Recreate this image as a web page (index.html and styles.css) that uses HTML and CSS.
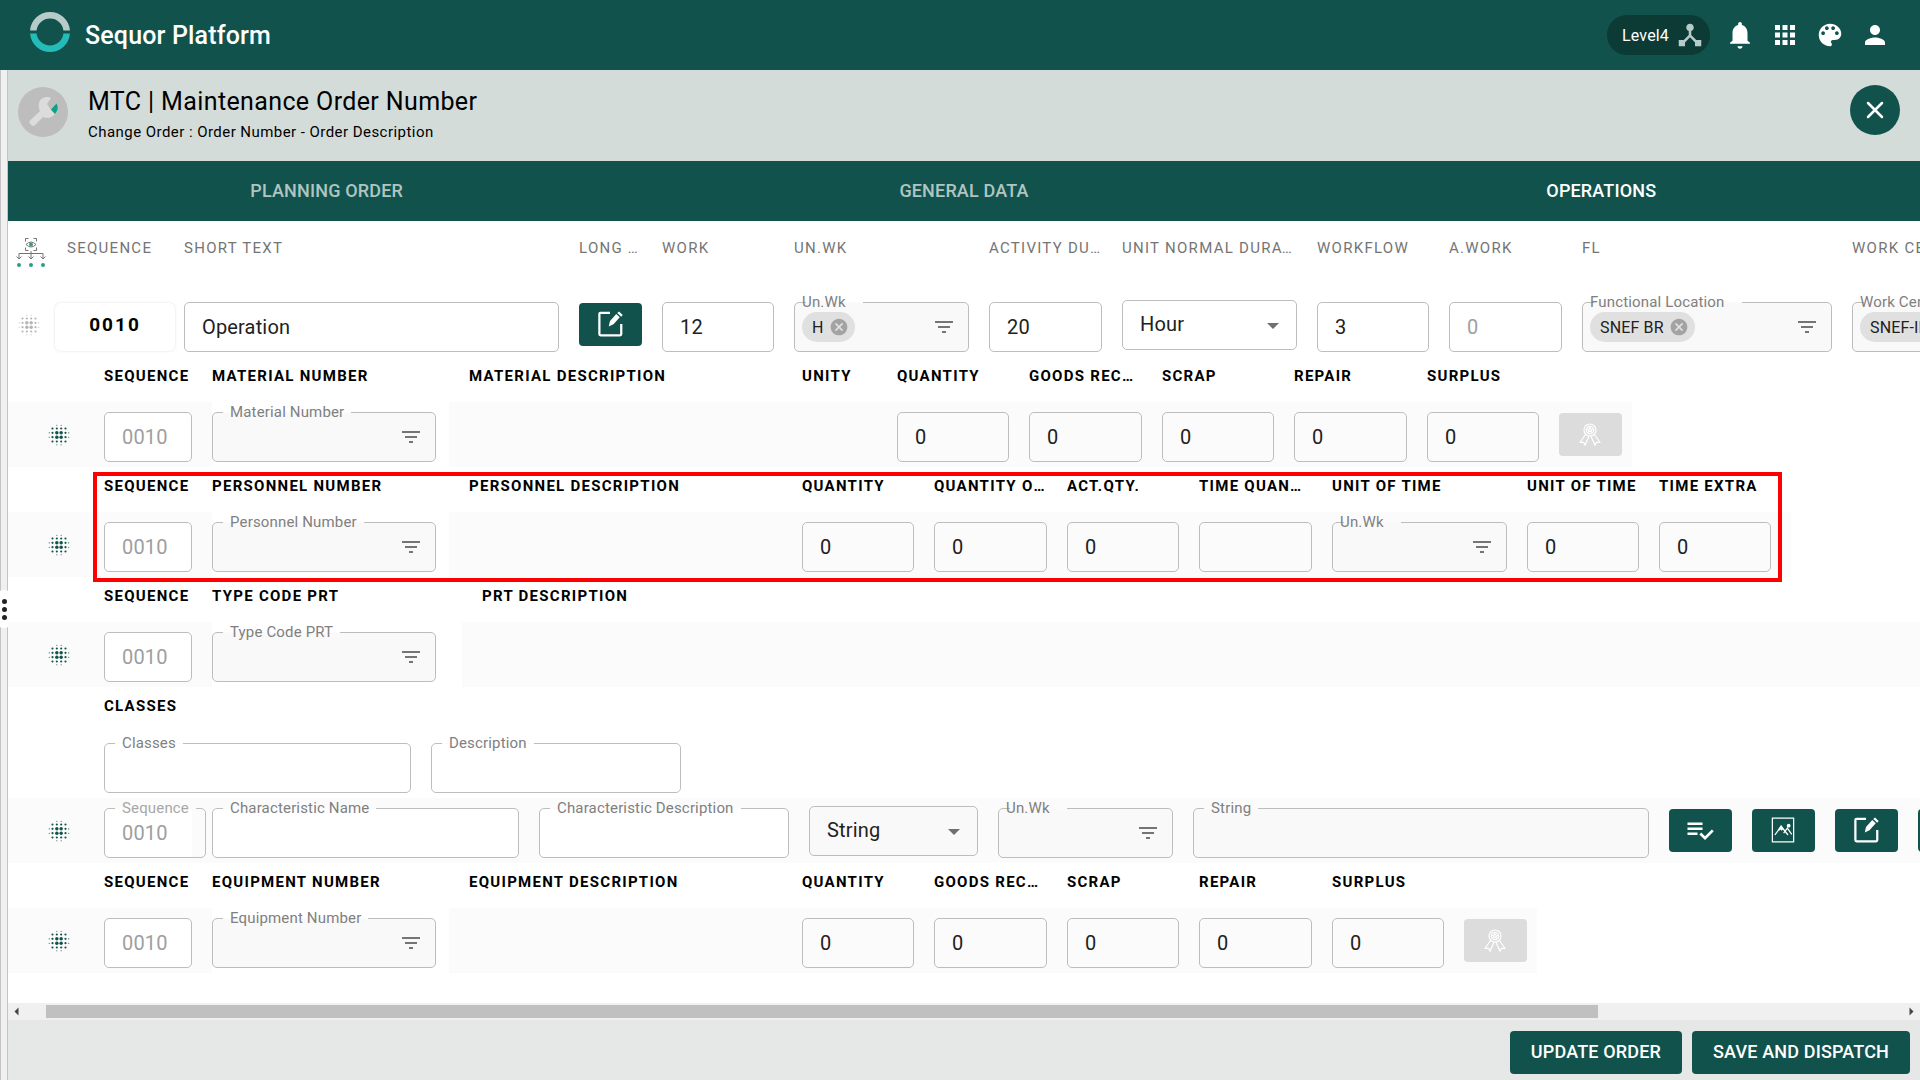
FILE: index.html
```html
<!doctype html>
<html lang="en">
  <head>
    <meta charset="UTF-8" />
    <meta name="viewport" content="width=device-width, initial-scale=1.0" />
    <title>Sequor Platform</title>
    <link rel="stylesheet" href="styles.css">
  </head>
  <body>
    <!-- icon set -->
    <svg class="sprite" aria-hidden="true">
      <symbol id="drag" viewBox="0 0 24 24">
        <circle cx="6" cy="6" r="1" /><circle cx="10" cy="6" r="1" /><circle cx="14" cy="6" r="1" /><circle cx="18" cy="6" r="1" />
        <circle cx="6" cy="10" r="1" /><circle cx="10" cy="10" r="1.6" /><circle cx="14" cy="10" r="1.6" /><circle cx="18" cy="10" r="1" />
        <circle cx="6" cy="14" r="1" /><circle cx="10" cy="14" r="1.6" /><circle cx="14" cy="14" r="1.6" /><circle cx="18" cy="14" r="1" />
        <circle cx="6" cy="18" r="1" /><circle cx="10" cy="18" r="1" /><circle cx="14" cy="18" r="1" /><circle cx="18" cy="18" r="1" />
        <circle cx="10" cy="3" r=".5" /><circle cx="14" cy="3" r=".5" /><circle cx="10" cy="21" r=".5" /><circle cx="14" cy="21" r=".5" />
        <circle cx="3" cy="10" r=".5" /><circle cx="3" cy="14" r=".5" /><circle cx="21" cy="10" r=".5" /><circle cx="21" cy="14" r=".5" />
      </symbol>
      <symbol id="filter" viewBox="0 0 24 24"><path d="M10 18h4v-2h-4v2zM3 6v2h18V6H3zm3 7h12v-2H6v2z" /></symbol>
      <symbol id="cancel" viewBox="0 0 24 24"><path d="M12 2C6.47 2 2 6.47 2 12s4.47 10 10 10 10-4.47 10-10S17.53 2 12 2zm5 13.59L15.59 17 12 13.41 8.41 17 7 15.59 10.59 12 7 8.41 8.41 7 12 10.59 15.59 7 17 8.41 13.41 12 17 15.59z" /></symbol>
      <symbol id="edit" viewBox="0 0 24 24">
        <path d="M12 3H4.500Q3.500 3 3.500 4V20Q3.500 21 4.500 21H20Q21 21 21 20V12" fill="none" stroke="currentColor" stroke-width="1.800" />
        <path d="M11 14l1-4.500 5-5.500 2.800 2.600-5 5.500zM17.800 3.200l1.400-1.200 3 2.800-1.300 1.400z" />
      </symbol>
      <symbol id="award" viewBox="0 0 24 24">
        <g fill="none" stroke="currentColor" stroke-width="1.200" stroke-linejoin="round">
          <circle cx="12" cy="8" r="6" /><circle cx="12" cy="8" r="3.700" />
          <path d="M12 5.600l.7 1.500 1.600.2-1.200 1.100.3 1.700-1.400-.8-1.400.8.3-1.700-1.200-1.100 1.600-.2z" />
          <path d="M7.500 12.500L2 20.500l3.600-.2L7 23.300l4-9M16.500 12.500l5.500 8-3.600-.2L17 23.300l-4-9" />
        </g>
      </symbol>
    </svg>

    <header class="topbar">
      <svg class="logo" viewBox="0 0 40 40" aria-hidden="true">
        <path d="M.06 18.500A20 20 0 0 1 39.940 18.500H33.420A13.500 13.500 0 0 0 6.580 18.500Z" fill="#b7cbc9" />
        <path d="M.06 21.500A20 20 0 0 0 39.940 21.500H33.420A13.500 13.500 0 0 1 6.580 21.500Z" fill="#24bcb8" />
      </svg>
      <span class="brand">Sequor Platform</span>
      <nav class="tools">
        <button class="level" type="button">
          Level4
          <svg class="icon-lg" viewBox="0 0 24 24"><path d="M17 16l-4-4V8.820C14.160 8.400 15 7.300 15 6c0-1.660-1.340-3-3-3S9 4.340 9 6c0 1.300.84 2.400 2 2.820V12l-4 4H3v5h5v-3.050l4-4.200 4 4.200V21h5v-5h-4z" /></svg>
        </button>
        <button class="tool" type="button" aria-label="Notifications">
          <svg class="icon-lg" viewBox="0 0 24 24"><path d="M12 23.500c1.100 0 2-.9 2-2h-4c0 1.100.9 2 2 2zM18 17v-6c0-3.300-1.640-5.900-4.500-6.600V3.500C13.500 2.700 12.800 2 12 2s-1.500.7-1.500 1.500v.9C7.630 5.100 6 7.700 6 11v6l-2 1.600v.9h16v-.9L18 17z" transform="translate(0 -.5)" /></svg>
        </button>
        <button class="tool" type="button" aria-label="Apps">
          <svg class="icon-lg" viewBox="0 0 24 24"><path d="M4 8h4V4H4v4zm6 12h4v-4h-4v4zm-6 0h4v-4H4v4zm0-6h4v-4H4v4zm6 0h4v-4h-4v4zm6-10v4h4V4h-4zm-6 4h4V4h-4v4zm6 6h4v-4h-4v4zm0 6h4v-4h-4v4z" /></svg>
        </button>
        <button class="tool" type="button" aria-label="Theme">
          <svg class="icon-lg" viewBox="0 0 24 24"><path d="M12 3c-4.970 0-9 4.030-9 9s4.030 9 9 9c.83 0 1.500-.67 1.500-1.500 0-.39-.15-.74-.39-1.010-.23-.26-.38-.61-.38-.99 0-.83.67-1.500 1.500-1.500H16c2.760 0 5-2.240 5-5 0-4.420-4.030-8-9-8zm-5.500 9c-.83 0-1.500-.67-1.500-1.500S5.670 9 6.500 9 8 9.670 8 10.500 7.330 12 6.500 12zm3-4C8.670 8 8 7.330 8 6.500S8.670 5 9.500 5s1.500.67 1.500 1.500S10.330 8 9.500 8zm5 0c-.83 0-1.500-.67-1.500-1.500S13.670 5 14.500 5s1.500.67 1.500 1.500S15.330 8 14.500 8zm3 4c-.83 0-1.500-.67-1.500-1.500S16.670 9 17.500 9s1.500.67 1.500 1.500-.67 1.500-1.500 1.500z" /></svg>
        </button>
        <button class="tool" type="button" aria-label="Profile">
          <svg class="icon-lg" viewBox="0 0 24 24"><path d="M12 12c2.210 0 4-1.790 4-4s-1.790-4-4-4-4 1.790-4 4 1.790 4 4 4zm0 2c-2.670 0-8 1.340-8 4v2h16v-2c0-2.660-5.330-4-8-4z" /></svg>
        </button>
      </nav>
    </header>

    <div class="layout">
      <div class="splitter">
        <div class="splitter-grip"><i></i><i></i><i></i></div>
      </div>

      <main class="page">
        <div class="page-head">
          <svg class="avatar" viewBox="0 0 50 50" aria-hidden="true">
            <circle cx="25" cy="25" r="25" fill="#bdbdbd" />
            <path d="M12 33.500L22 24C19 18 21 11 28 10q3-.5 5 1L29 17l4 6 4 4c-3 3.500-7 5-12 3l-8.500 8.500q-1.500 1-3-.5l-2-2q-1-1 .5-2.500z" fill="#dcdcdc" />
            <path d="M33 22.500l5.500-6q3 5-1.500 10.500z" fill="#0aa287" />
          </svg>
          <div class="page-title">
            <h1>MTC | Maintenance Order Number</h1>
            <p>Change Order : Order Number - Order Description</p>
          </div>
          <button class="close" type="button" aria-label="Close">
            <svg viewBox="0 0 20 20"><path d="M3 3l14 14M17 3L3 17" /></svg>
          </button>
        </div>

        <nav class="tabs">
          <a href="#planning">PLANNING ORDER</a>
          <a href="#general">GENERAL DATA</a>
          <a class="active" href="#operations">OPERATIONS</a>
        </nav>

        <div class="sheet">
          <!-- operation -->
          <table class="grid grid-main">
            <thead>
              <tr>
                <th class="c-grip-main">
                  <svg class="tree" viewBox="0 0 30 30" role="img" aria-label="Operations">
                    <g fill="none" stroke="#757575">
                      <path d="M9.500 3.500v-3h3M17.500 .5h3v3M9.500 9.500v3h3M17.500 12.500h3v-3M3 20v-4.500h24V20M15 13v7M.5 18.500L3 21l2.500-2.500M12.500 18.500L15 21l2.500-2.500M24.500 18.500L27 21l2.500-2.500" />
                      <path d="M10 6.500q5-5 10 0q-5 5-10 0z" />
                    </g>
                    <g fill="#2f9c85"><circle cx="15" cy="6.500" r="2" /><circle cx="3" cy="27" r="2" /><circle cx="15" cy="27" r="2" /><circle cx="27" cy="27" r="2" /></g>
                  </svg>
                </th>
                <th class="c-seq-main">SEQUENCE</th>
                <th class="c-text">SHORT TEXT</th>
                <th class="c-btn">LONG TEXT</th>
                <th class="c-num">WORK</th>
                <th class="c-unit">UN.WK</th>
                <th class="c-num-b">ACTIVITY DURATION</th>
                <th class="c-unit">UNIT NORMAL DURATION</th>
                <th class="c-num">WORKFLOW</th>
                <th class="c-num-b">A.WORK</th>
                <th class="c-place">FL</th>
                <th class="c-place">WORK CENTER</th>
              </tr>
            </thead>
            <tbody>
              <tr>
                <td><svg class="grip"><use href="#drag" /></svg></td>
                <td><div class="seq-card">0010</div></td>
                <td><div class="field"><input type="text" value="Operation" aria-label="Short text" /></div></td>
                <td><button class="btn-icon" type="button" aria-label="Long text"><svg><use href="#edit" /></svg></button></td>
                <td><div class="field"><input type="text" value="12" aria-label="Work" /></div></td>
                <td>
                  <div class="field lookup">
                    <label class="edge" for="op-unit">Un.Wk</label>
                    <span class="chip">H<svg><use href="#cancel" /></svg></span>
                    <input type="text" id="op-unit" />
                    <svg class="filter"><use href="#filter" /></svg>
                  </div>
                </td>
                <td><div class="field"><input type="text" value="20" aria-label="Activity duration" /></div></td>
                <td><div class="field select"><select aria-label="Unit normal duration"><option>Hour</option></select></div></td>
                <td><div class="field"><input type="text" value="3" aria-label="Workflow" /></div></td>
                <td><div class="field"><input type="text" placeholder="0" aria-label="A.Work" /></div></td>
                <td>
                  <div class="field lookup">
                    <label class="edge" for="op-fl">Functional Location</label>
                    <span class="chip">SNEF BR<svg><use href="#cancel" /></svg></span>
                    <input type="text" id="op-fl" />
                    <svg class="filter"><use href="#filter" /></svg>
                  </div>
                </td>
                <td>
                  <div class="field lookup">
                    <label class="edge" for="op-wc">Work Center</label>
                    <span class="chip">SNEF-INT<svg><use href="#cancel" /></svg></span>
                    <input type="text" id="op-wc" />
                    <svg class="filter"><use href="#filter" /></svg>
                  </div>
                </td>
              </tr>
            </tbody>
          </table>

          <!-- materials -->
          <table class="grid">
            <thead>
              <tr>
                <th class="c-grip"></th>
                <th class="c-seq">SEQUENCE</th>
                <th class="c-key">MATERIAL NUMBER</th>
                <th class="c-desc">MATERIAL DESCRIPTION</th>
                <th class="c-unity">UNITY</th>
                <th class="c-num">QUANTITY</th>
                <th class="c-num-b">GOODS RECEIPT</th>
                <th class="c-num">SCRAP</th>
                <th class="c-num-b">REPAIR</th>
                <th class="c-num">SURPLUS</th>
                <th class="c-end"></th>
              </tr>
            </thead>
            <tbody>
              <tr>
                <td><svg class="grip"><use href="#drag" /></svg></td>
                <td><div class="field white"><input type="text" value="0010" aria-label="Sequence" disabled /></div></td>
                <td class="key">
                  <div class="field lookup">
                    <label for="material">Material Number</label>
                    <input type="text" id="material" />
                    <svg class="filter"><use href="#filter" /></svg>
                  </div>
                </td>
                <td></td>
                <td></td>
                <td><div class="field"><input type="text" value="0" aria-label="Quantity" /></div></td>
                <td><div class="field"><input type="text" value="0" aria-label="Goods receipt" /></div></td>
                <td><div class="field"><input type="text" value="0" aria-label="Scrap" /></div></td>
                <td><div class="field"><input type="text" value="0" aria-label="Repair" /></div></td>
                <td><div class="field"><input type="text" value="0" aria-label="Surplus" /></div></td>
                <td><button class="btn-icon" type="button" aria-label="Quality" disabled><svg><use href="#award" /></svg></button></td>
              </tr>
            </tbody>
          </table>

          <!-- personnel -->
          <div class="highlighted">
            <table class="grid">
              <thead>
                <tr>
                  <th class="c-grip"></th>
                  <th class="c-seq">SEQUENCE</th>
                  <th class="c-key">PERSONNEL NUMBER</th>
                  <th class="c-desc">PERSONNEL DESCRIPTION</th>
                  <th class="c-num">QUANTITY</th>
                  <th class="c-num-b">QUANTITY OPERATION</th>
                  <th class="c-num">ACT.QTY.</th>
                  <th class="c-num-b">TIME QUANTITY</th>
                  <th class="c-unit">UNIT OF TIME</th>
                  <th class="c-num">UNIT OF TIME</th>
                  <th class="c-num">TIME EXTRA</th>
                </tr>
              </thead>
              <tbody>
                <tr>
                  <td><svg class="grip"><use href="#drag" /></svg></td>
                  <td><div class="field white"><input type="text" value="0010" aria-label="Sequence" disabled /></div></td>
                  <td class="key">
                    <div class="field lookup">
                      <label for="personnel">Personnel Number</label>
                      <input type="text" id="personnel" />
                      <svg class="filter"><use href="#filter" /></svg>
                    </div>
                  </td>
                  <td></td>
                  <td><div class="field"><input type="text" value="0" aria-label="Quantity" /></div></td>
                  <td><div class="field"><input type="text" value="0" aria-label="Quantity operation" /></div></td>
                  <td><div class="field"><input type="text" value="0" aria-label="Actual quantity" /></div></td>
                  <td><div class="field"><input type="text" aria-label="Time quantity" /></div></td>
                  <td>
                    <div class="field lookup">
                      <label class="edge" for="time-unit">Un.Wk</label>
                      <input type="text" id="time-unit" />
                      <svg class="filter"><use href="#filter" /></svg>
                    </div>
                  </td>
                  <td><div class="field"><input type="text" value="0" aria-label="Unit of time" /></div></td>
                  <td><div class="field"><input type="text" value="0" aria-label="Time extra" /></div></td>
                </tr>
              </tbody>
            </table>
          </div>

          <!-- PRT -->
          <table class="grid grid-fill">
            <thead>
              <tr>
                <th class="c-grip"></th>
                <th class="c-seq">SEQUENCE</th>
                <th class="c-key-wide">TYPE CODE PRT</th>
                <th class="c-rest">PRT DESCRIPTION</th>
              </tr>
            </thead>
            <tbody>
              <tr>
                <td><svg class="grip"><use href="#drag" /></svg></td>
                <td><div class="field white"><input type="text" value="0010" aria-label="Sequence" disabled /></div></td>
                <td class="key key-wide">
                  <div class="field lookup">
                    <label for="prt">Type Code PRT</label>
                    <input type="text" id="prt" />
                    <svg class="filter"><use href="#filter" /></svg>
                  </div>
                </td>
                <td></td>
              </tr>
            </tbody>
          </table>

          <!-- classes -->
          <h2 class="section">CLASSES</h2>
          <div class="form-row">
            <div class="field w-class"><label for="class">Classes</label><input type="text" id="class" /></div>
            <div class="field w-text"><label for="class-desc">Description</label><input type="text" id="class-desc" /></div>
          </div>
          <div class="form-row band">
            <svg class="grip"><use href="#drag" /></svg>
            <div class="field w-seq"><label class="faded" for="char-seq">Sequence</label><input type="text" id="char-seq" value="0010" disabled /></div>
            <div class="field white w-class"><label for="char-name">Characteristic Name</label><input type="text" id="char-name" /></div>
            <div class="field white w-text"><label for="char-desc">Characteristic Description</label><input type="text" id="char-desc" /></div>
            <div class="field select w-type"><select aria-label="Type"><option>String</option></select></div>
            <div class="field lookup w-unit">
              <label class="edge" for="char-unit">Un.Wk</label>
              <input type="text" id="char-unit" />
              <svg class="filter"><use href="#filter" /></svg>
            </div>
            <div class="field lookup w-value"><label for="char-value">String</label><input type="text" id="char-value" /></div>
            <button class="btn-icon" type="button" aria-label="Check list">
              <svg viewBox="0 0 24 24"><path d="M14 10H2v2h12v-2zm0-4H2v2h12V6zM2 14v2h8v-2H2zm19.500-2.500L23 13l-6.990 7-4.510-4.500L13 14l3.010 3 5.490-5.500z" /></svg>
            </button>
            <button class="btn-icon" type="button" aria-label="Image">
              <svg viewBox="0 0 24 24"><path d="M3.500 2.500h17v19h-17zM5.500 16l5-7 5.500 7M12.500 14.500l3-4 3.500 5" fill="none" stroke="currentColor" /><path d="M10.500 8l2 3-1.500 1.500-1-1-1 1-.8-1.200z" /><circle cx="16.500" cy="8.500" r="1.500" /></svg>
            </button>
            <button class="btn-icon" type="button" aria-label="Edit"><svg><use href="#edit" /></svg></button>
            <button class="btn-icon" type="button" aria-label="More"></button>
          </div>

          <!-- equipment -->
          <table class="grid">
            <thead>
              <tr>
                <th class="c-grip"></th>
                <th class="c-seq">SEQUENCE</th>
                <th class="c-key">EQUIPMENT NUMBER</th>
                <th class="c-desc">EQUIPMENT DESCRIPTION</th>
                <th class="c-num">QUANTITY</th>
                <th class="c-num-b">GOODS RECEIPT</th>
                <th class="c-num">SCRAP</th>
                <th class="c-num-b">REPAIR</th>
                <th class="c-num">SURPLUS</th>
                <th class="c-end"></th>
              </tr>
            </thead>
            <tbody>
              <tr>
                <td><svg class="grip"><use href="#drag" /></svg></td>
                <td><div class="field white"><input type="text" value="0010" aria-label="Sequence" disabled /></div></td>
                <td class="key">
                  <div class="field lookup">
                    <label for="equipment">Equipment Number</label>
                    <input type="text" id="equipment" />
                    <svg class="filter"><use href="#filter" /></svg>
                  </div>
                </td>
                <td></td>
                <td><div class="field"><input type="text" value="0" aria-label="Quantity" /></div></td>
                <td><div class="field"><input type="text" value="0" aria-label="Goods receipt" /></div></td>
                <td><div class="field"><input type="text" value="0" aria-label="Scrap" /></div></td>
                <td><div class="field"><input type="text" value="0" aria-label="Repair" /></div></td>
                <td><div class="field"><input type="text" value="0" aria-label="Surplus" /></div></td>
                <td><button class="btn-icon" type="button" aria-label="Quality" disabled><svg><use href="#award" /></svg></button></td>
              </tr>
            </tbody>
          </table>
        </div>

        <div class="scrollbar" aria-hidden="true">
          <svg viewBox="0 0 17 17"><path d="M10.500 4.500v8l-4-4z" /></svg>
          <div class="track"><div class="thumb"></div></div>
          <svg viewBox="0 0 17 17"><path d="M6.500 4.500v8l4-4z" /></svg>
        </div>

        <footer class="actions">
          <button type="button">UPDATE ORDER</button>
          <button type="button">SAVE AND DISPATCH</button>
        </footer>
      </main>
    </div>
  </body>
</html>
```
FILE: styles.css
```css
* {
  box-sizing: border-box;
}
body {
  margin: 0;
  min-height: 100vh;
  display: flex;
  flex-direction: column;
  font-family: Roboto, "Liberation Sans", sans-serif;
  letter-spacing: 0.01em;
  color: #000;
  background-color: #fff;
  overflow-x: hidden;
}
button,
input,
select {
  font-family: inherit;
  letter-spacing: inherit;
}
button {
  border: none;
  padding: 0;
  cursor: pointer;
}
svg {
  fill: currentColor;
}
.sprite {
  position: absolute;
  width: 0;
  height: 0;
}

/* top bar */
.topbar {
  display: flex;
  align-items: center;
  height: 70px;
  padding: 0 30px;
  background-color: #11534c;
  color: #fff;
}
.logo {
  width: 40px;
  height: 40px;
  margin: 0 15px 6px 0;
}
.brand {
  font-size: 25px;
  font-weight: 500;
}
.tools {
  display: flex;
  align-items: center;
  gap: 15px;
  margin-left: auto;
}
.level {
  display: flex;
  align-items: center;
  gap: 6px;
  height: 40px;
  padding: 0 5px 0 15px;
  border-radius: 20px;
  background-color: #0c3a35;
  color: #fff;
  font-size: 16px;
}
.level svg {
  color: #b7cbc9;
}
.tool {
  height: 30px;
  background: none;
  color: #fff;
}
.icon-lg {
  display: block;
  width: 30px;
  height: 30px;
}

/* splitter */
.layout {
  flex: 1;
  display: flex;
}
.splitter {
  flex: none;
  display: flex;
  align-items: center;
  width: 8px;
  padding-top: 68px;
  background-color: #f0f0f0;
  border-left: 1px solid #c4c4c4;
  border-right: 1px solid #c4c4c4;
}
.splitter-grip {
  flex: none;
  display: flex;
  flex-direction: column;
  align-items: center;
  justify-content: center;
  gap: 3px;
  width: 10px;
  height: 38px;
  margin-left: -2px;
  border-radius: 4px;
  background-color: #fff;
  z-index: 1;
}
.splitter-grip i {
  width: 5px;
  height: 5px;
  border-radius: 50%;
  background-color: #222;
}

/* page head */
.page {
  flex: 1;
  min-width: 0;
  display: flex;
  flex-direction: column;
}
.page-head {
  display: flex;
  align-items: flex-start;
  height: 91px;
  padding: 15px 20px 0 10px;
  background-color: #d4dcd9;
}
.avatar {
  width: 50px;
  height: 50px;
  margin: 2px 20px 0 0;
}
.page-title h1 {
  margin: 0;
  font-size: 25px;
  font-weight: 400;
  line-height: 33px;
  letter-spacing: 0.015em;
}
.page-title p {
  margin: 4px 0 0;
  font-size: 15px;
  line-height: 20px;
  letter-spacing: 0.03em;
}
.close {
  display: flex;
  align-items: center;
  justify-content: center;
  width: 50px;
  height: 50px;
  margin-left: auto;
  border-radius: 50%;
  background-color: #11534c;
  color: #fff;
}
.close svg {
  width: 20px;
  height: 20px;
  stroke: currentColor;
  stroke-width: 2.5;
  stroke-linecap: round;
}

/* tabs */
.tabs {
  display: flex;
  height: 60px;
  background-color: #11534c;
}
.tabs a {
  flex: 1;
  text-align: center;
  line-height: 60px;
  font-size: 18px;
  font-weight: 500;
  color: #b0c5c2;
  text-decoration: none;
}
.tabs a.active {
  color: #fff;
}

/* operation sheet */
.sheet {
  flex: 1;
  overflow: hidden;
  padding-bottom: 30px;
}
.grid {
  table-layout: fixed;
  width: 0;
  border-collapse: collapse;
}
.grid-fill {
  width: 100%;
}
.grid th,
.section {
  height: 45px;
  margin: 0;
  padding: 9px 21px 0 0;
  font-size: 15px;
  font-weight: 700;
  line-height: 20px;
  letter-spacing: 0.085em;
  text-align: left;
  vertical-align: top;
  white-space: nowrap;
  overflow: hidden;
  text-overflow: ellipsis;
}
.section {
  padding-left: 96px;
}
.grid td {
  height: 65px;
  padding: 10px 20px 0 0;
  background-color: #fbfbfb;
  vertical-align: top;
}
.grid td.key {
  padding-right: 13px;
  background-color: #fff;
}
.grid td.key-wide {
  padding-right: 26px;
}
.grid-main th {
  height: 71px;
  padding-top: 17px;
  color: #757575;
  font-weight: 400;
}
.grid-main td {
  background-color: #fff;
}
.grid .c-grip-main {
  width: 47px;
  padding: 17px 0 0 8px;
}
.grid .c-seq-main {
  width: 129px;
  padding-left: 12px;
}
.c-text {
  width: 395px;
}
.c-btn {
  width: 83px;
}
.c-num {
  width: 132px;
}
.c-num-b {
  width: 133px;
}
.c-unit {
  width: 195px;
}
.c-place {
  width: 270px;
}
.c-grip {
  width: 96px;
}
.c-seq {
  width: 108px;
}
.c-key {
  width: 237px;
}
.c-key-wide {
  width: 250px;
}
.grid .c-desc {
  width: 353px;
  padding-left: 20px;
}
.grid .c-rest {
  padding-left: 20px;
}
.c-unity {
  width: 95px;
}
.c-end {
  width: 73px;
}
.tree {
  display: block;
  width: 30px;
  height: 30px;
}
.grip {
  display: block;
  width: 26px;
  height: 26px;
  margin: 10px 0 0 38px;
  color: #11534c;
}
.grid-main .grip {
  margin-left: 8px;
  color: #b5b5b5;
}
.seq-card {
  width: 120px;
  height: 48px;
  margin-top: 1px;
  border-radius: 6px;
  box-shadow: 0 0 3px rgba(0, 0, 0, 0.12);
  font-size: 19px;
  font-weight: 700;
  line-height: 43px;
  letter-spacing: 2px;
  text-align: center;
}

/* fields */
.field {
  position: relative;
  display: flex;
  align-items: center;
  height: 50px;
  border: 1px solid #bdbdbd;
  border-radius: 5px;
}
.field.white {
  background-color: #fff;
}
.field.lookup {
  padding-right: 12px;
  background-color: #f9f9f9;
}
.field input,
.field select {
  flex: 1;
  min-width: 0;
  width: 100%;
  height: 48px;
  padding: 0 0 0 17px;
  border: none;
  outline: none;
  background: none;
  color: #212121;
  font-size: 20px;
}
.field input:disabled,
.field input::placeholder {
  color: #9e9e9e;
  opacity: 1;
}
.field label {
  position: absolute;
  top: -11px;
  left: 10px;
  padding: 0 7px;
  color: #808080;
  font-size: 15px;
  line-height: 20px;
  white-space: nowrap;
  /* opens the border behind the text */
  background: linear-gradient(#fbfbfb, #fbfbfb) no-repeat 0 10px / 100% 1px;
}
.field label.edge {
  left: 7px;
  padding: 0 17px 0 0;
  background-position: 4px 10px;
  background-size: calc(100% - 4px) 1px;
}
.field label.faded {
  color: #a8a8a8;
}
.field.select {
  align-items: flex-start;
  margin-top: -2px;
}
.field select {
  appearance: none;
  height: 46px;
}
.field.select::after {
  content: "";
  position: absolute;
  right: 17px;
  top: 22px;
  border: 6px solid transparent;
  border-top-color: #707070;
  border-bottom: none;
  pointer-events: none;
}
.filter {
  flex: none;
  width: 24px;
  height: 24px;
  color: #757575;
}
.chip {
  flex: none;
  display: flex;
  align-items: center;
  gap: 5px;
  height: 30px;
  margin-left: 7px;
  padding: 0 6px 0 10px;
  border-radius: 15px;
  background-color: #e0e0e0;
  color: #212121;
  font-size: 16px;
}
.chip svg {
  width: 20px;
  height: 20px;
  color: #a3a3a3;
}

.btn-icon {
  flex: none;
  display: flex;
  align-items: center;
  justify-content: center;
  width: 63px;
  height: 43px;
  margin-top: 1px;
  padding: 0 2px 2px 0;
  border-radius: 4px;
  background-color: #11534c;
  color: #fff;
}
.btn-icon svg {
  width: 30px;
  height: 30px;
}
.btn-icon:disabled {
  background-color: #dcdcdc;
  cursor: default;
}
.btn-icon:disabled svg {
  width: 24px;
  height: 24px;
}

/* frame round the personnel row */
.highlighted {
  position: relative;
  width: max-content;
}
.highlighted::after {
  content: "";
  position: absolute;
  inset: 5px 9px -5px 85px;
  border: 4px solid #f00;
  pointer-events: none;
}

/* classes */
.form-row {
  display: flex;
  align-items: flex-start;
  gap: 20px;
  width: max-content;
  min-width: 100%;
  height: 66px;
  padding: 11px 0 0 96px;
}
.form-row.band {
  height: 65px;
  padding: 10px 0 0;
  background-color: #fbfbfb;
}
.form-row .grip {
  margin-right: 12px;
}
.w-class {
  width: 307px;
}
.w-text {
  width: 250px;
}
.w-seq {
  width: 102px;
  margin-right: -14px;
  background: linear-gradient(#fff, #fff) no-repeat 0 0 / 87px 100%;
}
.w-type {
  width: 169px;
  background-color: #f9f9f9;
}
.w-unit {
  width: 175px;
}
.w-value {
  width: 456px;
}

/* horizontal scroll */
.scrollbar {
  display: flex;
  height: 17px;
  background-color: #f0f0f0;
  color: #444;
}
.scrollbar svg {
  width: 17px;
  height: 17px;
}
.track {
  flex: 1;
  padding: 2px 0 2px 21px;
}
.thumb {
  width: 83.6%;
  height: 13px;
  background-color: #c0c0c0;
}

.actions {
  display: flex;
  align-items: flex-start;
  justify-content: flex-end;
  gap: 10px;
  height: 60px;
  padding: 11px 10px 0;
  background-color: #e6e8e7;
}
.actions button {
  height: 43px;
  padding: 0 21px 2px;
  border-radius: 4px;
  background-color: #11534c;
  color: #fff;
  font-size: 18px;
  font-weight: 500;
}
```
